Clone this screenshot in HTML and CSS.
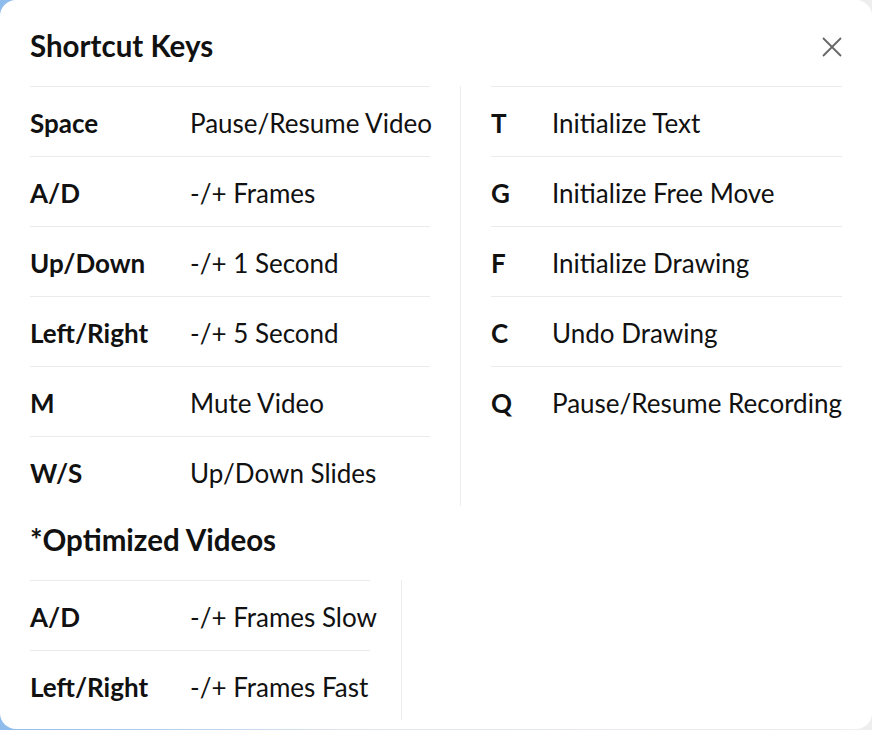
FILE: index.html
```html
<!DOCTYPE html>
<html lang="en">
  <head>
    <meta charset="UTF-8" />
    <meta name="viewport" content="width=device-width, initial-scale=1.0" />
    <title>Shortcut Keys</title>
    <link rel="stylesheet" href="styles.css">
  </head>
  <body>
    <div class="modal">
      <header class="modal-header">
        <h1>Shortcut Keys</h1>
        <button class="close" aria-label="Close">
          <svg width="20" height="20" viewBox="0 0 20 20">
            <path d="M1 1L19 19M19 1L1 19" stroke="#666" stroke-width="1.8" fill="none" />
          </svg>
        </button>
      </header>

      <div class="section">
        <div class="keys">
          <div class="row"><span class="key">Space</span><span class="desc">Pause/Resume Video</span></div>
          <div class="row"><span class="key">A/D</span><span class="desc">-/+ Frames</span></div>
          <div class="row"><span class="key">Up/Down</span><span class="desc">-/+ 1 Second</span></div>
          <div class="row"><span class="key">Left/Right</span><span class="desc">-/+ 5 Second</span></div>
          <div class="row"><span class="key">M</span><span class="desc">Mute Video</span></div>
          <div class="row"><span class="key">W/S</span><span class="desc">Up/Down Slides</span></div>
        </div>
        <div class="divider"></div>
        <div class="keys keys-short">
          <div class="row"><span class="key">T</span><span class="desc">Initialize Text</span></div>
          <div class="row"><span class="key">G</span><span class="desc">Initialize Free Move</span></div>
          <div class="row"><span class="key">F</span><span class="desc">Initialize Drawing</span></div>
          <div class="row"><span class="key">C</span><span class="desc">Undo Drawing</span></div>
          <div class="row"><span class="key">Q</span><span class="desc">Pause/Resume Recording</span></div>
        </div>
      </div>

      <h2>*Optimized Videos</h2>

      <div class="section section-small">
        <div class="keys">
          <div class="row"><span class="key">A/D</span><span class="desc">-/+ Frames Slow</span></div>
          <div class="row"><span class="key">Left/Right</span><span class="desc">-/+ Frames Fast</span></div>
        </div>
        <div class="divider"></div>
      </div>
    </div>
  </body>
</html>
```

FILE: styles.css
```css
/* 初始化样式 */
* {
  margin: 0;
  padding: 0;
  box-sizing: border-box;
}

body {
  font-family: Lato, "Open Sans", Arial, sans-serif;
  color: #111;
  background: linear-gradient(90deg, #8fbcec 0%, #dfe6ee 40%, #eeeeee 100%);
  width: 872px;
  height: 730px;
  overflow: hidden;
}

.modal {
  width: 872px;
  height: 729px;
  background-color: #fff;
  border-radius: 16px;
  padding: 30px 30px 0 30px;
}

.modal-header {
  display: flex;
  justify-content: space-between;
  align-items: center;
  height: 34px;
  margin-bottom: 22px;
}

h1,
h2 {
  font-size: 29.5px;
  font-weight: 700;
  line-height: 34px;
}

h1 {
  margin-top: -2px;
}

h2 {
  margin: 17px 0 23px;
}

.close {
  background: none;
  border: none;
  width: 20px;
  height: 20px;
  cursor: pointer;
  display: flex;
}

.section {
  display: grid;
  grid-template-columns: 400px 1px 351px;
  column-gap: 30px;
}

.section-small {
  grid-template-columns: 340px 1px;
  column-gap: 31px;
}

.divider {
  background-color: #ededed;
}

.row {
  display: flex;
  align-items: center;
  height: 70px;
  border-top: 1px solid #ebebeb;
  font-size: 26px;
  line-height: 30px;
  padding-top: 2px;
}

.key {
  width: 160px;
  font-weight: 700;
  flex-shrink: 0;
}

.keys-short .key {
  width: 61px;
}

.desc {
  font-weight: 400;
  white-space: nowrap;
}
```
